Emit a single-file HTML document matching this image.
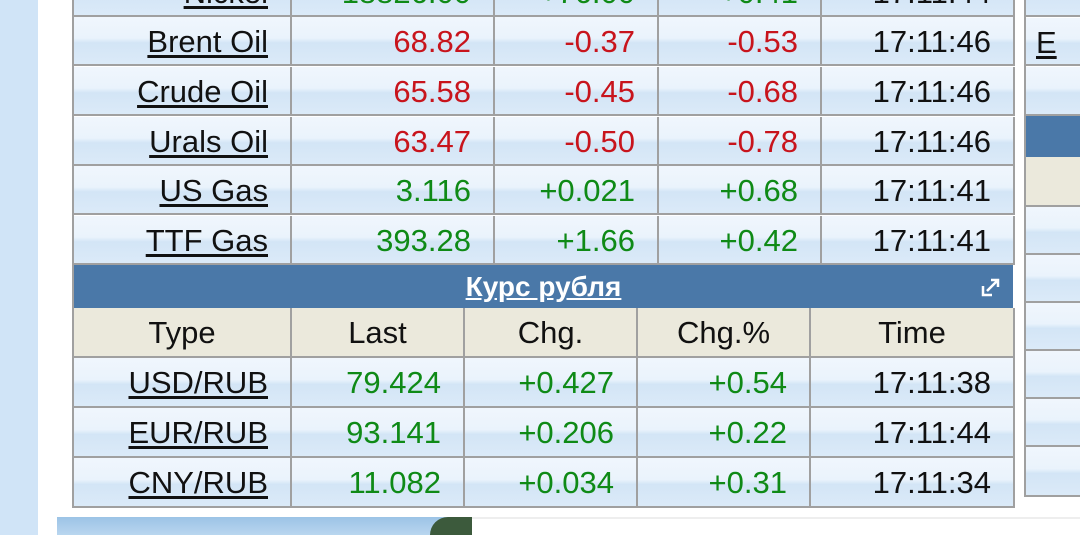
<!DOCTYPE html>
<html><head><meta charset="utf-8"><style>
*{margin:0;padding:0;box-sizing:border-box}
body{width:1080px;height:535px;overflow:hidden;background:#fff;font-family:"Liberation Sans",sans-serif;position:relative}
.c{position:absolute;border-right:2px solid #a0a0a0;border-bottom:2px solid #a0a0a0;background:linear-gradient(#f0f6fd 0%,#eaf3fc 45%,#d3e5f6 55%,#dbeaf8 100%);font-size:31px;line-height:49px;text-align:right;padding-right:22px;white-space:nowrap;overflow:hidden}
.n{color:#111;text-decoration:underline;text-underline-offset:3px}
.r{color:#c8141c}.g{color:#0f8a16}.k{color:#111}
.h{background:#ebe9dc;text-align:center;padding:0;color:#111}
.bar{position:absolute;background:#4a78a8;color:#fff}
</style></head><body>
<div style="position:absolute;left:0;top:0;width:38px;height:535px;background:#d0e4f7"></div>
<div style="position:absolute;left:72px;top:0;width:2px;height:508px;background:#a0a0a0"></div>
<div id="t"></div>
<div class="bar" style="left:74px;top:265px;width:939px;height:43px;text-align:center;font-size:28px;line-height:43px;font-weight:bold"><span style="text-decoration:underline">Курс рубля</span>
<svg style="position:absolute;right:12px;top:12px" width="20" height="20" viewBox="0 0 20 20"><path d="M2 9v9h9" stroke="#fff" stroke-width="2.5" fill="none"/><path d="M6 14L16 4M10 3h7v7" stroke="#fff" stroke-width="2.5" fill="none"/></svg></div>
<div style="position:absolute;left:74px;top:506px;width:941px;height:2px;background:#a0a0a0"></div>
<div style="position:absolute;left:1024px;top:0;width:2px;height:497px;background:#a0a0a0"></div>
<div class="bar" style="left:1026px;top:116px;width:54px;height:41px"></div>
<div style="position:absolute;left:57px;top:517px;width:415px;height:18px;background:linear-gradient(#9cc3e6,#b9d6ef)"></div>
<div style="position:absolute;left:430px;top:517px;width:42px;height:18px;background:#3c5a3c;border-radius:20px 0 0 0"></div>
<div style="position:absolute;left:472px;top:517px;width:608px;height:2px;background:#eee"></div>
<script>
var t=document.getElementById('t'),h='';
function cell(x,y,w,hh,txt,cls){h+='<div class="c '+cls+'" style="left:'+x+'px;top:'+y+'px;width:'+w+'px;height:'+hh+'px">'+txt+'</div>';}
var xs=[74,292,495,659,822,1015];
var rows=[[-32,'Nickel','18826.00','+76.00','+0.41','17:11:44','g'],[17,'Brent Oil','68.82','-0.37','-0.53','17:11:46','r'],[67,'Crude Oil','65.58','-0.45','-0.68','17:11:46','r'],[117,'Urals Oil','63.47','-0.50','-0.78','17:11:46','r'],[166,'US Gas','3.116','+0.021','+0.68','17:11:41','g'],[216,'TTF Gas','393.28','+1.66','+0.42','17:11:41','g']];
rows.forEach(function(r){for(var i=0;i<5;i++){cell(xs[i],r[0],xs[i+1]-xs[i],49,i==0?'<span class="n">'+r[1]+'</span>':r[i+1],i==0?'':i==4?'k':r[6]);}});
var x2=[74,292,465,638,811,1015];
var hd=['Type','Last','Chg.','Chg.%','Time'];
for(var i=0;i<5;i++)cell(x2[i],308,x2[i+1]-x2[i],50,hd[i],'h');
var r2=[[358,'USD/RUB','79.424','+0.427','+0.54','17:11:38'],[408,'EUR/RUB','93.141','+0.206','+0.22','17:11:44'],[458,'CNY/RUB','11.082','+0.034','+0.31','17:11:34']];
r2.forEach(function(r){for(var i=0;i<5;i++){cell(x2[i],r[0],x2[i+1]-x2[i],50,i==0?'<span class="n">'+r[1]+'</span>':r[i+1],i==0?'':i==4?'k':'g');}});
var ry=[[-31,48],[18,48],[67,49]];
ry.forEach(function(a,j){cell(1026,a[0],60,a[1],j==1?'<span class="n" style="position:absolute;left:10px">E</span>':'','');});
cell(1026,157,60,50,'','h');
[207,255,303,351,399,447].forEach(function(y){cell(1026,y,60,y==447?50:48,'','');});
t.innerHTML=h;
document.querySelectorAll('.c').forEach(function(e){var l=parseInt(e.style.left);if(l>=1000&&l<1020)e.style.paddingRight='24px';});
</script>
</body></html>
